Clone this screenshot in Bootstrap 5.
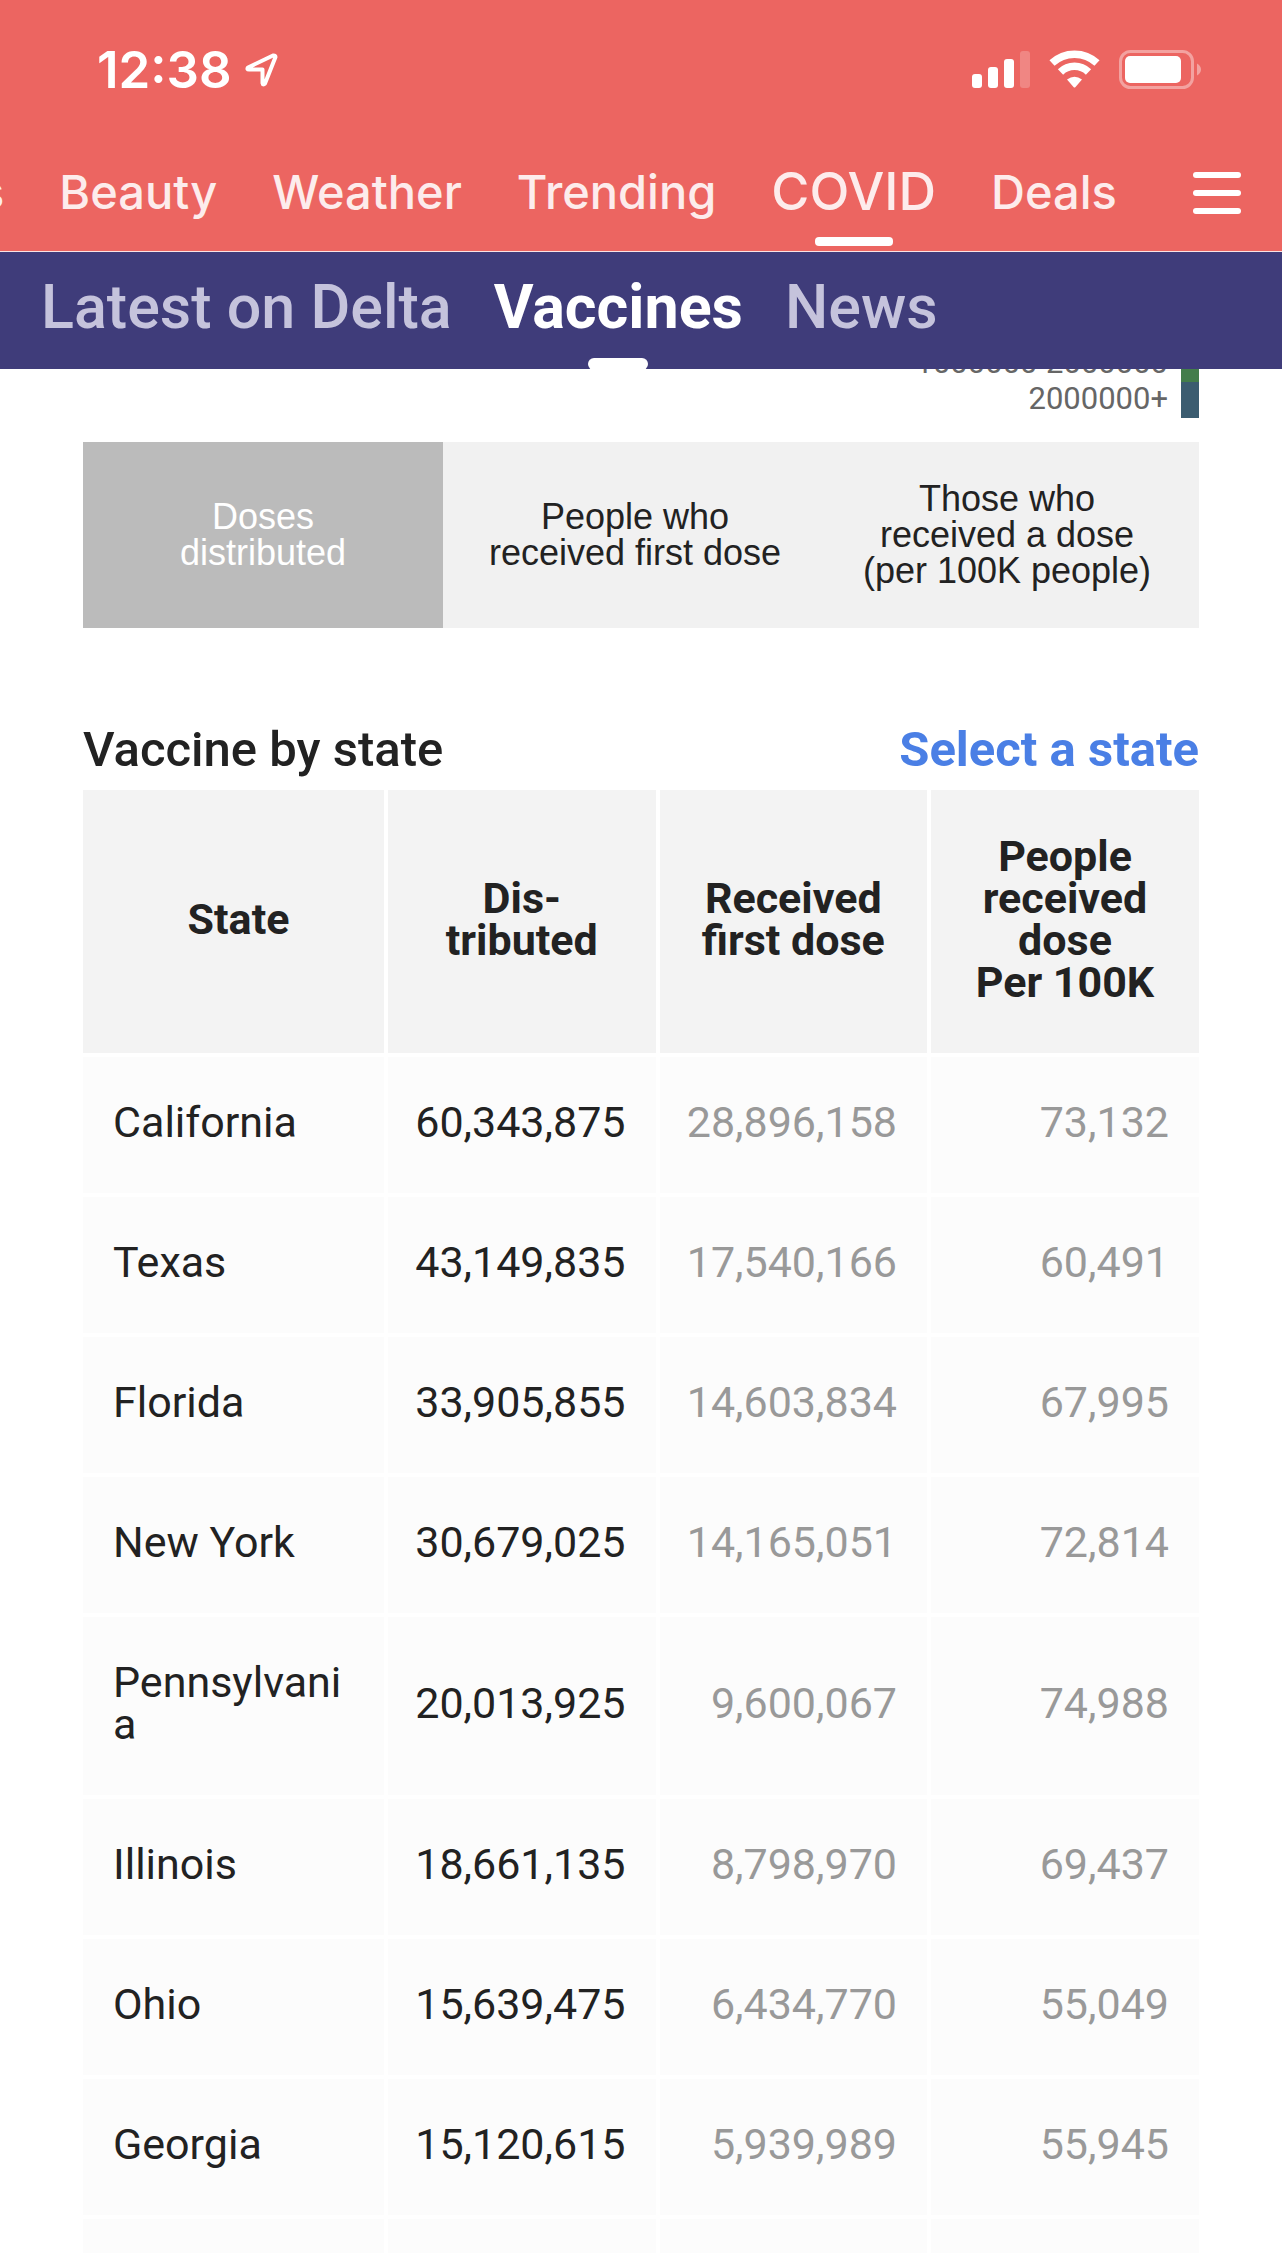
<!DOCTYPE html>
<html lang="en">
<head>
<meta charset="utf-8">
<meta name="viewport" content="width=device-width, initial-scale=1">
<title>COVID – Vaccines</title>
<link rel="stylesheet" href="https://cdn.jsdelivr.net/npm/bootstrap@5.3.0/dist/css/bootstrap.min.css">
<style>
  body { font-family: Roboto, "Liberation Sans", sans-serif; color: #222; background: #fff; }
  a { text-decoration: none; }
  .app-top { background: #ec6561; border-bottom: 1px solid #fbe3e4; font-family: Inter, Roboto, sans-serif; color: #fff; }
  .status-row { height: 140px; padding: 0 80px 0 97px; }
  .clock { font-size: 51px; line-height: 60px; font-weight: 600; }
  .status-left { gap: 12px; }
  .topics { height: 111px; }
  .topics-list { gap: 55px; margin-left: -21px; padding-bottom: 8px; }
  .topics-list a { color: #fdecec; font-size: 47px; line-height: 56px; font-weight: 500; }
  .topics-list a.on { font-size: 52px; position: relative; }
  .topics-list a.on::after { content: ""; position: absolute; left: 50%; margin-left: -39px; bottom: -26px; width: 78px; height: 9px; border-radius: 4px; background: #fff; }
  .menu-btn { padding: 0 0 6px; margin-right: 40px; line-height: 0; }
  .sub-nav { background: #3f3c7a; height: 117px; gap: 42px; padding: 0 0 8px 41px; font-size: 61px; line-height: 70px; font-weight: 500; }
  .sub-nav a { color: #c5c3dc; }
  .sub-nav a.on { color: #fff; font-weight: 700; position: relative; }
  .sub-nav a.on::after { content: ""; position: absolute; left: 50%; margin-left: -30px; bottom: -28px; width: 60px; height: 12px; border-radius: 6px; background: #fff; }
  .page-pad { padding: 0 83px; }
  .legend-keys { margin-top: -23px; font-size: 31px; line-height: 34px; color: #666; }
  .legend-keys i { width: 18px; height: 36px; margin-left: 13px; }
  .seg { margin-top: 24px; padding-right: 12px; background: #f1f1f1; }
  .seg button { flex: 1 1 360px; height: 186px; border: 0; padding: 0; background: transparent; color: #222; font: 36px/36px "Liberation Sans", sans-serif; }
  .seg button.on { background: #bbb; color: #fff; }
  .seg button.wide { flex-basis: 384px; }
  .head-row { margin-top: 94px; font-size: 49px; line-height: 56px; }
  .head-row h1 { font-size: 49px; line-height: 56px; font-weight: 500; margin: 0; }
  .head-row a { color: #4a7fe5; font-weight: 700; }
  .state-table { margin-top: 12px; width: 100%; table-layout: fixed; border-collapse: separate; border-spacing: 0; font-size: 43px; line-height: 42px; }
  .state-table th, .state-table td { padding: 44px 30px 50px; background: #fcfcfc; background-clip: padding-box; border: 0 solid #fff; border-width: 0 4px 4px 0; vertical-align: middle; }
  .state-table tr > :last-child { border-right-width: 0; }
  .state-table thead th { background-color: #f3f3f3; text-align: center; font-weight: 700; padding: 45px 20px 50px; }
  .state-table thead th:first-child { padding-left: 30px; }
  .state-table tbody th { font-weight: 400; }
  .state-table td { text-align: right; color: #999; padding-left: 20px; }
  .state-table td:nth-child(2) { color: #222; }
  .c-state { width: 305px; } .c-rate { width: 268px; }
</style>
<script src="https://cdn.jsdelivr.net/npm/bootstrap@5.3.0/dist/js/bootstrap.bundle.min.js"></script>
</head>
<body class="vh-100 overflow-hidden d-flex flex-column">
<header class="app-top flex-shrink-0">
  <div class="status-row d-flex align-items-center justify-content-between">
    <div class="status-left d-flex align-items-center">
      <span class="clock">12:38</span>
      <svg width="36" height="36" viewBox="0 0 36 36" fill="none" stroke="#fff" stroke-width="4" stroke-linejoin="round" aria-hidden="true"><path d="M29 3.500L4 15.500Q2.500 17.500 5 17.500H18.500V31Q19 33.500 21 31.500L31.500 5Q31.500 3 29 3.500Z"/></svg>
    </div>
    <svg width="230" height="42" viewBox="0 0 230 42" fill="#fff" aria-hidden="true">
      <rect x="0" y="25" width="10" height="14" rx="3"/><rect x="16" y="18" width="10" height="21" rx="3"/><rect x="32" y="10" width="10" height="29" rx="3"/><rect x="48" y="2" width="10" height="37" rx="3" opacity=".22"/>
      <g fill="none" stroke="#fff" stroke-width="7.500"><path d="M80 14A33 33 0 0 1 125 14"/><path d="M88.500 23A20 20 0 0 1 116.500 23"/></g>
      <path d="M95 30.500Q102.500 25 110 30.500L103.500 38Q102.500 39 101.500 38Z"/>
      <rect x="148.500" y="2.500" width="72" height="36" rx="10" fill="none" stroke="#fff" stroke-width="3" opacity=".4"/>
      <rect x="153" y="7" width="56" height="27" rx="5"/><path d="M225 14.500Q229 17 229 20.500T225 26.500Z" opacity=".4"/>
    </svg>
  </div>
  <div class="topics d-flex justify-content-between">
    <nav class="topics-list d-flex align-items-center" aria-label="Topics">
      <a href="#">s</a><a href="#">Beauty</a><a href="#">Weather</a><a href="#">Trending</a><a href="#" class="on" aria-current="page">COVID</a><a href="#">Deals</a>
    </nav>
    <button type="button" class="btn menu-btn" aria-label="Menu"><svg width="48" height="42" viewBox="0 0 48 42" fill="#fff"><rect width="48" height="6" rx="3"/><rect y="18" width="48" height="6" rx="3"/><rect y="36" width="48" height="6" rx="3"/></svg></button>
  </div>
</header>
<nav class="sub-nav d-flex align-items-center flex-shrink-0" aria-label="COVID sections">
  <a href="#">Latest on Delta</a><a href="#" class="on" aria-current="page">Vaccines</a><a href="#">News</a>
</nav>
<main class="page-pad overflow-hidden flex-grow-1">
  <div class="legend-keys">
    <div class="d-flex justify-content-end">1000000-2000000<i style="background:#437d4b"></i></div>
    <div class="d-flex justify-content-end">2000000+<i style="background:#3b5c70"></i></div>
  </div>
  <div class="seg d-flex">
    <button type="button" class="on" aria-pressed="true">Doses<br>distributed</button>
    <button type="button" class="wide">People who<br>received first dose</button>
    <button type="button">Those who<br>received a dose<br>(per 100K people)</button>
  </div>
  <div class="head-row d-flex justify-content-between">
    <h1>Vaccine by state</h1><a href="#">Select a state</a>
  </div>
  <table class="state-table">
    <colgroup><col class="c-state"><col><col><col class="c-rate"></colgroup>
    <thead><tr><th scope="col">State</th><th scope="col">Dis-<br>tributed</th><th scope="col">Received<br>first dose</th><th scope="col">People<br>received<br>dose<br>Per 100K</th></tr></thead>
    <tbody>
      <tr><th scope="row">California</th><td>60,343,875</td><td>28,896,158</td><td>73,132</td></tr>
      <tr><th scope="row">Texas</th><td>43,149,835</td><td>17,540,166</td><td>60,491</td></tr>
      <tr><th scope="row">Florida</th><td>33,905,855</td><td>14,603,834</td><td>67,995</td></tr>
      <tr><th scope="row">New York</th><td>30,679,025</td><td>14,165,051</td><td>72,814</td></tr>
      <tr><th scope="row">Pennsylvani<br>a</th><td>20,013,925</td><td>9,600,067</td><td>74,988</td></tr>
      <tr><th scope="row">Illinois</th><td>18,661,135</td><td>8,798,970</td><td>69,437</td></tr>
      <tr><th scope="row">Ohio</th><td>15,639,475</td><td>6,434,770</td><td>55,049</td></tr>
      <tr><th scope="row">Georgia</th><td>15,120,615</td><td>5,939,989</td><td>55,945</td></tr>
      <tr><td></td><td></td><td></td><td></td></tr>
    </tbody>
  </table>
</main>
</body>
</html>
